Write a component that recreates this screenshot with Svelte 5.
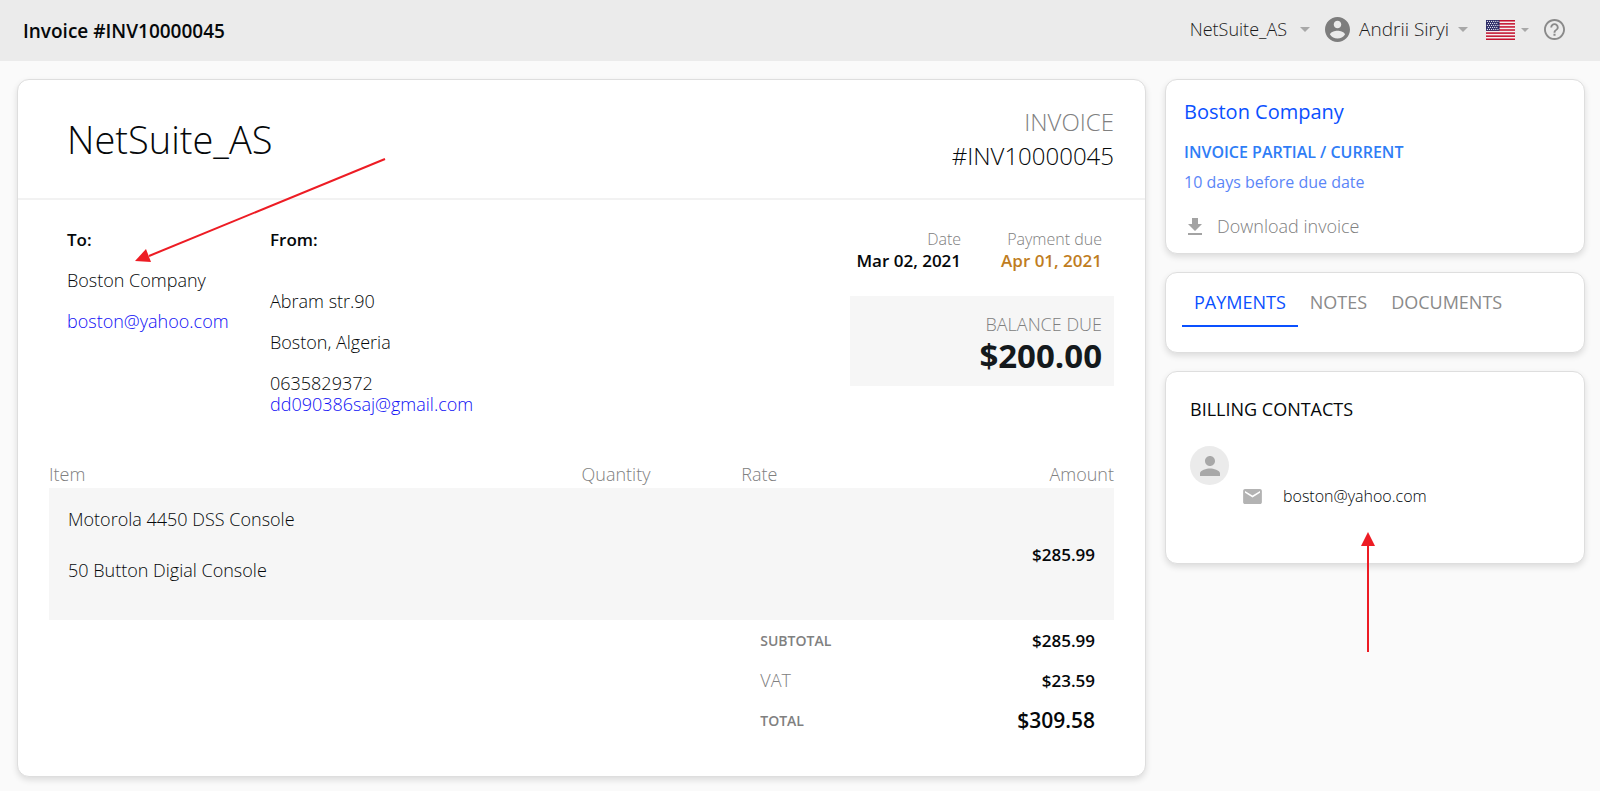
<script>
    let company = 'NetSuite_AS';
    let user = 'Andrii Siryi';
    let number = '#INV10000045';

    let customer = { name: 'Boston Company', email: 'boston@yahoo.com' };
    let sender = {
        lines: ['Abram str.90', 'Boston, Algeria'],
        phone: '0635829372',
        email: 'dd090386saj@gmail.com'
    };

    let items = [
        { name: 'Motorola 4450 DSS Console', notes: '50 Button Digial Console', quantity: '', rate: '', amount: '$285.99' }
    ];

    let tabs = ['Payments', 'Notes', 'Documents'];
    let activeTab = 'Payments';

    // stars on the flag, staggered rows
    let stars = [];
    for (let row = 0; row < 5; row++) {
        for (let col = 0; col < 6 - (row % 2); col++) {
            stars.push({ x: 1.4 + col * 2.1 + (row % 2), y: 1.3 + row * 2 });
        }
    }
</script>

<div class="page">
    <header class="topbar">
        <h1 class="title">Invoice {number}</h1>
        <nav class="menu">
            <button class="menu-button company-menu">
                {company}
                <svg class="caret" viewBox="0 0 10 5"><path d="M0 0h10L5 5z" /></svg>
            </button>
            <button class="menu-button user-menu">
                <svg class="account" viewBox="2 2 20 20">
                    <path d="M12 2C6.48 2 2 6.48 2 12s4.48 10 10 10 10-4.48 10-10S17.52 2 12 2zm0 3c1.66 0 3 1.34 3 3s-1.34 3-3 3-3-1.34-3-3 1.34-3 3-3zm0 14.2c-2.5 0-4.71-1.28-6-3.22.03-1.99 4-3.08 6-3.08 1.99 0 5.97 1.09 6 3.08-1.29 1.94-3.5 3.22-6 3.22z" />
                </svg>
                <span>{user}</span>
                <svg class="caret" viewBox="0 0 10 5"><path d="M0 0h10L5 5z" /></svg>
            </button>
            <button class="menu-button flag-menu" aria-label="Language">
                <svg class="flag" viewBox="0 0 29 20">
                    <rect width="29" height="20" fill="#f4f0f0" />
                    {#each [0, 1, 2, 3, 4, 5, 6] as stripe}
                        <rect y={stripe * 3.08} width="29" height="1.54" fill="#c4122f" />
                    {/each}
                    <rect width="13.5" height="10.8" fill="#2b2a66" />
                    {#each stars as star}
                        <circle cx={star.x} cy={star.y} r="0.65" fill="#fff" />
                    {/each}
                </svg>
                <svg class="caret small" viewBox="0 0 10 5"><path d="M0 0h10L5 5z" /></svg>
            </button>
            <button class="menu-button" aria-label="Help">
                <svg class="help" viewBox="2 2 20 20">
                    <path d="M11 18h2v-2h-2v2zm1-16C6.48 2 2 6.48 2 12s4.48 10 10 10 10-4.48 10-10S17.52 2 12 2zm0 18.2c-4.5 0-8.2-3.7-8.2-8.2s3.7-8.2 8.2-8.2 8.2 3.7 8.2 8.2-3.7 8.2-8.2 8.2zm0-14.2c-2.21 0-4 1.79-4 4h1.8c0-1.2 1-2.2 2.2-2.2s2.2 1 2.2 2.2c0 2-3.1 1.75-3.1 5h1.8c0-2.25 3.1-2.5 3.1-5 0-2.21-1.79-4-4-4z" />
                </svg>
            </button>
        </nav>
    </header>

    <div class="content">
        <main class="card invoice">
            <div class="invoice-head">
                <h2 class="brand">{company}</h2>
                <div class="invoice-id">
                    <div class="muted">INVOICE</div>
                    <div>{number}</div>
                </div>
            </div>

            <div class="details">
                <div class="to">
                    <strong>To:</strong>
                    <p>{customer.name}</p>
                    <p><a href="mailto:{customer.email}">{customer.email}</a></p>
                </div>
                <div class="from">
                    <strong>From:</strong>
                    <div class="address">
                        {#each sender.lines as line}
                            <p>{line}</p>
                        {/each}
                        <p>
                            {sender.phone}<br />
                            <a href="mailto:{sender.email}">{sender.email}</a>
                        </p>
                    </div>
                </div>
                <div class="summary">
                    <div class="dates">
                        <div>
                            <div class="date-label">Date</div>
                            <strong>Mar 02, 2021</strong>
                        </div>
                        <div>
                            <div class="date-label">Payment due</div>
                            <strong class="due">Apr 01, 2021</strong>
                        </div>
                    </div>
                    <div class="balance">
                        <div class="muted">BALANCE DUE</div>
                        <div class="balance-value">$200.00</div>
                    </div>
                </div>
            </div>

            <table class="items">
                <colgroup>
                    <col class="col-item" />
                    <col class="col-narrow" />
                    <col class="col-narrow" />
                    <col />
                </colgroup>
                <thead>
                    <tr>
                        <th scope="col">Item</th>
                        <th scope="col">Quantity</th>
                        <th scope="col">Rate</th>
                        <th scope="col" class="right">Amount</th>
                    </tr>
                </thead>
                <tbody>
                    {#each items as item}
                        <tr>
                            <td>
                                <p>{item.name}</p>
                                <p class="notes">{item.notes}</p>
                            </td>
                            <td>{item.quantity}</td>
                            <td>{item.rate}</td>
                            <td class="amount">{item.amount}</td>
                        </tr>
                    {/each}
                </tbody>
                <tfoot>
                    <tr>
                        <td colspan="2"></td>
                        <td class="sum-label">SUBTOTAL</td>
                        <td class="amount">$285.99</td>
                    </tr>
                    <tr>
                        <td colspan="2"></td>
                        <td class="muted">VAT</td>
                        <td class="amount">$23.59</td>
                    </tr>
                    <tr>
                        <td colspan="2"></td>
                        <td class="sum-label">TOTAL</td>
                        <td class="amount total">$309.58</td>
                    </tr>
                </tfoot>
            </table>
        </main>

        <aside class="side">
            <section class="card status">
                <h3 class="customer">{customer.name}</h3>
                <p class="state">INVOICE PARTIAL / CURRENT</p>
                <p class="days">10 days before due date</p>
                <button class="download">
                    <svg viewBox="5 3 14 17"><path d="M19 9h-4V3H9v6H5l7 7 7-7zM5 18v2h14v-2H5z" /></svg>
                    Download invoice
                </button>
            </section>

            <section class="card tabs" role="tablist">
                {#each tabs as tab}
                    <button
                        class="tab"
                        class:active={tab === activeTab}
                        role="tab"
                        aria-selected={tab === activeTab}
                        on:click={() => (activeTab = tab)}>{tab.toUpperCase()}</button>
                {/each}
            </section>

            <section class="card contacts">
                <h3>BILLING CONTACTS</h3>
                <div class="avatar">
                    <svg viewBox="4 4 16 16"><path d="M12 12c2.21 0 4-1.79 4-4s-1.79-4-4-4-4 1.79-4 4 1.79 4 4 4zm0 2c-2.67 0-8 1.34-8 4v2h16v-2c0-2.66-5.33-4-8-4z" /></svg>
                </div>
                <div class="contact">
                    <svg viewBox="2 4 20 16"><path d="M20 4H4c-1.1 0-1.99.9-1.99 2L2 18c0 1.1.9 2 2 2h16c1.1 0 2-.9 2-2V6c0-1.1-.9-2-2-2zm0 4l-8 5-8-5V6l8 5 8-5v2z" /></svg>
                    <span>{customer.email}</span>
                </div>
            </section>
        </aside>
    </div>

    <!-- annotation arrows over the page -->
    <svg class="arrow to-arrow" viewBox="0 0 252 104">
        <path d="M250 1L14 98" />
        <polygon points="0,103 11,91 16,104" />
    </svg>
    <svg class="arrow contact-arrow" viewBox="0 0 14 120">
        <path d="M7 120V12" />
        <polygon points="7,0 14,14 0,14" />
    </svg>
</div>

<style>
    :global(body) {
        background: #fafafa;
    }
    .page {
        position: relative;
        font-family: "Open Sans", "Liberation Sans", sans-serif;
        font-size: 18px;
        line-height: 21px;
        font-weight: 300;
        color: #05080a;
    }
    h1, h2, h3, p {
        margin: 0;
        font-weight: inherit;
    }
    strong {
        font-weight: 600;
    }
    button {
        padding: 0;
        border: 0;
        background: none;
        font: inherit;
        color: inherit;
        cursor: pointer;
    }
    a {
        color: #0f0ff5;
        text-decoration: none;
    }
    svg {
        display: block;
        fill: currentColor;
    }
    .muted {
        color: #808080;
    }

    .topbar {
        display: flex;
        align-items: center;
        justify-content: space-between;
        box-sizing: border-box;
        height: 61px;
        padding: 2px 35px 0 23px;
        background: #ebebeb;
    }
    .title {
        font-size: 19px;
        font-weight: 600;
    }
    .menu {
        display: flex;
        align-items: center;
        gap: 15px;
        padding-bottom: 4px;
        color: #1a1a1a;
    }
    .menu-button {
        display: flex;
        align-items: center;
    }
    .company-menu {
        gap: 13px;
    }
    .user-menu {
        gap: 9px;
        font-size: 19px;
    }
    .flag-menu {
        gap: 6px;
        margin-left: 3px;
    }
    .caret {
        width: 10px;
        height: 5px;
        color: #a8a8a8;
    }
    .caret.small {
        width: 8px;
        height: 4px;
    }
    .account {
        width: 25px;
        height: 25px;
        color: #7d7d7d;
    }
    .flag {
        width: 29px;
        height: 20px;
    }
    .help {
        width: 21px;
        height: 21px;
        color: #8a8a8a;
    }

    .content {
        display: grid;
        grid-template-columns: minmax(0, 1fr) 420px;
        align-items: start;
        gap: 19px;
        padding: 18px 15px 15px 17px;
    }
    .card {
        background: #fff;
        border: 1px solid #dedede;
        border-radius: 12px;
        box-shadow: 0 3px 6px rgba(0, 0, 0, 0.12);
    }

    .invoice {
        padding-bottom: 36px;
    }
    .invoice-head {
        display: flex;
        align-items: center;
        justify-content: space-between;
        padding: 25px 31px 25px 49px;
        border-bottom: 2px solid #f2f2f2;
    }
    .brand {
        font-size: 38px;
        line-height: 52px;
    }
    .invoice-id {
        font-size: 24px;
        line-height: 34px;
        text-align: right;
    }

    .details {
        display: flex;
        padding: 29px 31px 0 49px;
    }
    .to,
    .address {
        display: flex;
        flex-direction: column;
        gap: 20px;
    }
    .to {
        width: 203px;
    }
    .details strong {
        font-size: 17px;
    }
    .address {
        margin-top: 41px;
    }
    .summary {
        width: 264px;
        margin-left: auto;
    }
    .dates {
        display: flex;
        justify-content: flex-end;
        gap: 40px;
        padding: 0 12px 25px 0;
        text-align: right;
        white-space: nowrap;
    }
    .date-label {
        font-size: 16px;
        color: #808080;
    }
    .due {
        color: #c07d1e;
    }
    .balance {
        padding: 18px 12px 9px;
        background: #f6f6f6;
        text-align: right;
    }
    .balance-value {
        font-size: 33px;
        line-height: 42px;
        font-weight: 700;
        color: #14191c;
    }

    .items {
        width: calc(100% - 62px);
        margin: 47px 31px 0;
        border-collapse: collapse;
        table-layout: fixed;
    }
    .col-item {
        width: 50%;
    }
    .col-narrow {
        width: 15%;
    }
    .items th {
        padding: 0 0 2px;
        line-height: 24px;
        font-weight: 300;
        text-align: left;
        color: #808080;
    }
    .items th.right {
        text-align: right;
    }
    .items td {
        padding: 0 19px;
    }
    .items tbody td {
        padding: 21px 19px 39px;
        background: #f6f6f6;
    }
    .items tbody td.amount {
        padding: 0 19px;
    }
    .notes {
        margin-top: 30px;
    }
    .items tfoot td {
        height: 40px;
    }
    .amount {
        font-size: 17px;
        font-weight: 600;
        text-align: right;
    }
    .sum-label {
        font-size: 14px;
        font-weight: 600;
        color: #808080;
    }
    .total {
        font-size: 21px;
    }

    .side {
        display: flex;
        flex-direction: column;
        gap: 18px;
    }
    .status {
        padding: 18px 18px 13px;
    }
    .customer {
        margin-bottom: 14px;
        font-size: 20px;
        line-height: 28px;
        font-weight: 400;
        color: #0a50ff;
    }
    .state {
        margin-bottom: 6px;
        font-size: 16px;
        line-height: 24px;
        font-weight: 600;
        color: #2f7df6;
    }
    .days {
        margin-bottom: 18px;
        font-size: 16px;
        line-height: 24px;
        font-weight: 400;
        color: #5b86f7;
    }
    .download {
        display: flex;
        align-items: center;
        gap: 15px;
        padding-left: 4px;
        line-height: 28px;
        color: #808080;
    }
    .download svg {
        width: 14px;
        height: 17px;
        color: #a3a3a3;
    }
    .tabs {
        display: flex;
        padding: 17px 16px 25px;
    }
    .tab {
        padding: 0 12px 11px;
        border-bottom: 2px solid transparent;
        line-height: 24px;
        font-weight: 400;
        color: #8a8a8a;
    }
    .tab.active {
        border-color: #0a50ff;
        color: #0a50ff;
    }
    .contacts {
        padding: 25px 24px 56px;
    }
    .contacts h3 {
        margin-bottom: 25px;
        font-size: 18px;
        line-height: 24px;
        font-weight: 400;
    }
    .avatar {
        display: flex;
        align-items: center;
        justify-content: center;
        width: 39px;
        height: 39px;
        border-radius: 50%;
        background: #ebebeb;
        color: #a8a8a8;
    }
    .avatar svg {
        width: 20px;
        height: 20px;
    }
    .contact {
        display: flex;
        align-items: center;
        gap: 21px;
        padding-left: 53px;
        font-size: 16px;
        line-height: 22px;
    }
    .contact svg {
        width: 19px;
        height: 15px;
        color: #b3b3b3;
    }

    .arrow {
        position: absolute;
        color: #ed1c24;
        pointer-events: none;
    }
    .arrow path {
        fill: none;
        stroke: #ed1c24;
        stroke-width: 2;
    }
    .to-arrow {
        top: 158px;
        left: 135px;
        width: 252px;
        height: 104px;
    }
    .contact-arrow {
        top: 532px;
        right: 225px;
        width: 14px;
        height: 120px;
    }
</style>
